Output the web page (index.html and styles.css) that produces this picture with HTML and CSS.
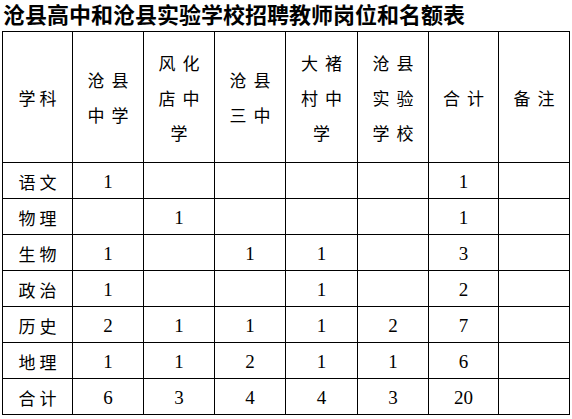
FILE: index.html
```html
<!DOCTYPE html>
<html lang="zh">
<head>
<meta charset="utf-8">
<title>沧县高中和沧县实验学校招聘教师岗位和名额表</title>
<link rel="stylesheet" href="styles.css">
</head>
<body>
<div class="page">
  <h1 class="title">沧县高中和沧县实验学校招聘教师岗位和名额表</h1>
  <table class="grid">
    <colgroup>
      <col class="c1"><col class="c2"><col class="c3"><col class="c4"><col class="c5"><col class="c6"><col class="c7"><col class="c8">
    </colgroup>
    <thead>
      <tr class="head">
        <th class="subj">学科</th>
        <th>沧县<br>中学</th>
        <th>风化<br>店中<br>学</th>
        <th>沧县<br>三中</th>
        <th>大褚<br>村中<br>学</th>
        <th>沧县<br>实验<br>学校</th>
        <th>合计</th>
        <th>备注</th>
      </tr>
    </thead>
    <tbody>
      <tr><td class="subj">语文</td><td>1</td><td></td><td></td><td></td><td></td><td>1</td><td></td></tr>
      <tr><td class="subj">物理</td><td></td><td>1</td><td></td><td></td><td></td><td>1</td><td></td></tr>
      <tr><td class="subj">生物</td><td>1</td><td></td><td>1</td><td>1</td><td></td><td>3</td><td></td></tr>
      <tr><td class="subj">政治</td><td>1</td><td></td><td></td><td>1</td><td></td><td>2</td><td></td></tr>
      <tr><td class="subj">历史</td><td>2</td><td>1</td><td>1</td><td>1</td><td>2</td><td>7</td><td></td></tr>
      <tr><td class="subj">地理</td><td>1</td><td>1</td><td>2</td><td>1</td><td>1</td><td>6</td><td></td></tr>
      <tr><td class="subj">合计</td><td>6</td><td>3</td><td>4</td><td>4</td><td>3</td><td>20</td><td></td></tr>
    </tbody>
  </table>
</div>
</body>
</html>
```

FILE: styles.css
```css
html, body {
  margin: 0;
  padding: 0;
  background: #ffffff;
  color: #000000;
}

.page {
  padding: 1px 0 0 2px;
}

.title {
  margin: 0 0 5px 1px;
  font-family: "Noto Sans CJK SC", "Noto Sans", sans-serif;
  font-size: 22px;
  font-weight: 700;
  line-height: 25px;
  white-space: nowrap;
}

.grid {
  border-collapse: collapse;
  table-layout: fixed;
  width: 568px;
  font-family: "Liberation Serif", "Noto Sans CJK SC", serif;
  font-size: 19px;
}

.c1 { width: 70px; }
.c2 { width: 71px; }
.c3 { width: 71px; }
.c4 { width: 71px; }
.c5 { width: 72px; }
.c6 { width: 71px; }
.c7 { width: 70px; }
.c8 { width: 71px; }

.grid th,
.grid td {
  border: 1px solid #000000;
  padding: 0;
  text-align: center;
  vertical-align: middle;
  font-weight: 400;
}

.head {
  height: 131px;
}

.head th {
  font-family: "Noto Sans CJK SC", sans-serif;
  font-size: 17px;
  line-height: 35px;
  letter-spacing: 7px;
  padding-left: 7px;
}

.grid tbody tr {
  height: 36px;
}

.grid td {
  line-height: 20px;
  padding-top: 2px;
}

.grid .subj {
  font-family: "Noto Sans CJK SC", sans-serif;
  font-size: 17px;
  letter-spacing: 4px;
  padding-left: 4px;
}

.grid td.subj {
  padding-top: 2px;
}
```
